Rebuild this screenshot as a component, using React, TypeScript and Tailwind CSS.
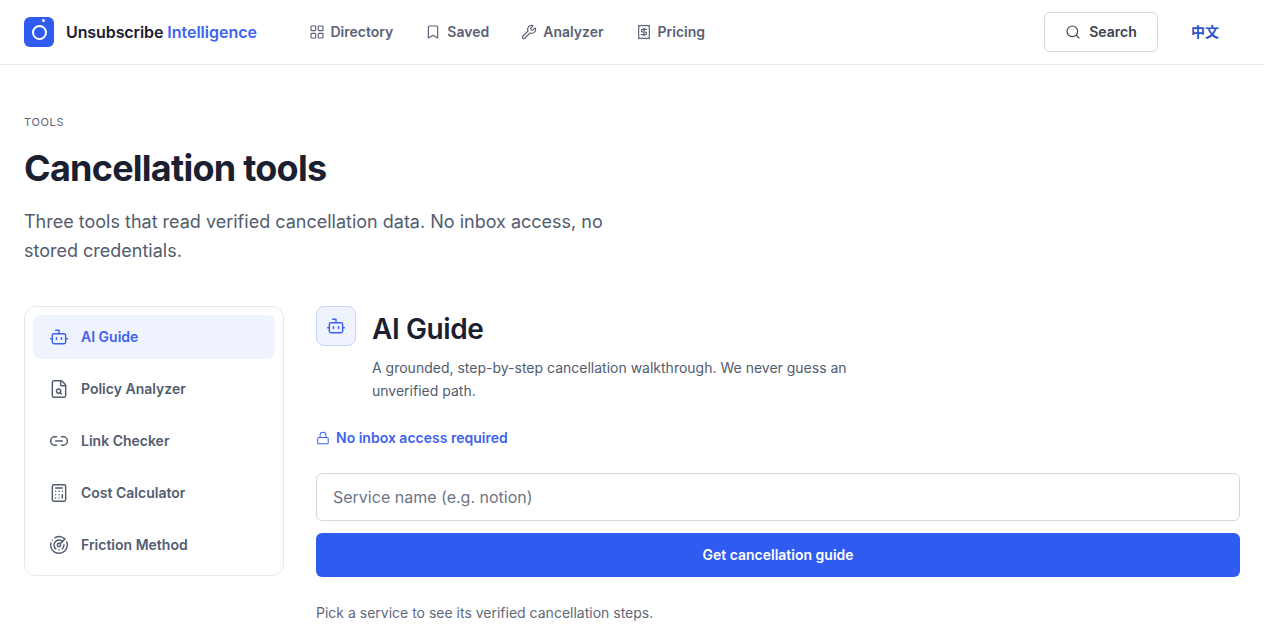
import React from "react";
import { LayoutGrid, Bookmark, Wrench, Receipt, Search, Bot, FileSearch, Link2, Calculator, Radar, Lock } from "lucide-react";

const nav = [
  { label: "Directory", Icon: LayoutGrid },
  { label: "Saved", Icon: Bookmark },
  { label: "Analyzer", Icon: Wrench },
  { label: "Pricing", Icon: Receipt },
];

const tools = [
  { label: "AI Guide", Icon: Bot, active: true },
  { label: "Policy Analyzer", Icon: FileSearch },
  { label: "Link Checker", Icon: Link2 },
  { label: "Cost Calculator", Icon: Calculator },
  { label: "Friction Method", Icon: Radar },
];

export default function App() {
  return (
    <div className="min-h-screen bg-white font-['Inter','Noto_Sans_CJK_SC',sans-serif] text-[#1a2030]">
      <header className="flex h-[65px] items-center border-b border-[#e8e9ee] px-6">
        <div className="flex items-center gap-3">
          <div className="relative flex h-[30px] w-[30px] items-center justify-center rounded-md bg-[#2f5bf0]">
            <span className="mt-[1px] h-[15px] w-[15px] rounded-full border-2 border-white" />
            <span className="absolute left-[18px] top-[2px] h-[3px] w-[3px] rounded-full bg-white" />
          </div>
          <span className="text-base font-semibold tracking-[-0.1px]">
            Unsubscribe <span className="tracking-normal text-[#3d63ee]">Intelligence</span>
          </span>
        </div>
        <nav className="ml-[51.5px] flex items-center gap-8">
          {nav.map(({ label, Icon }) => (
            <a key={label} className="flex items-center gap-[6px] text-sm font-semibold text-[#5a6274]">
              <Icon size={16} strokeWidth={1.75} />
              {label}
            </a>
          ))}
        </nav>
        <div className="ml-auto flex items-center">
          <button className="flex h-10 w-[114px] items-center justify-center gap-2 rounded-md border border-[#d5d8e2] text-sm font-semibold text-[#3c4250]">
            <Search size={16} strokeWidth={1.75} />
            Search
          </button>
          <button className="ml-[33px] mr-[21px] text-sm font-semibold text-[#2f52c8]">中文</button>
        </div>
      </header>

      <main className="px-6 pt-[50px]">
        <p className="text-[11px] leading-[14px] font-normal uppercase tracking-[0.66px] text-[#5a6274]">Tools</p>
        <h1 className="mt-[19px] text-[36px] leading-[40px] font-bold tracking-[-0.75px] text-[#1a2030]">Cancellation tools</h1>
        <p className="mt-[19px] w-[620px] text-lg leading-[29px] text-[#525c70]">
          Three tools that read verified cancellation data. No inbox access, no stored credentials.
        </p>

        <div className="mt-[41px] flex gap-8">
          <aside className="h-[270px] w-[260px] shrink-0 rounded-xl border border-[#e8e9ee] p-2">
            <ul className="flex flex-col gap-2">
              {tools.map(({ label, Icon, active }) => (
                <li
                  key={label}
                  className={`flex h-11 items-center gap-3 rounded-lg px-4 text-sm font-semibold ${active ? "bg-[#eff3fe] text-[#3d63ee]" : "text-[#525c70]"}`}
                >
                  <Icon size={20} strokeWidth={1.75} className="shrink-0" />
                  {label}
                </li>
              ))}
            </ul>
          </aside>

          <section className="min-w-0 flex-1">
            <div className="flex gap-4">
              <div className="flex h-10 w-10 shrink-0 items-center justify-center rounded-lg border border-[#c8d4fa] bg-[#eff3fe] text-[#3d63ee]">
                <Bot size={20} strokeWidth={1.75} />
              </div>
              <div>
                <h2 className="mt-[2px] text-[28px] leading-[42px] font-semibold tracking-[-0.4px] text-[#1a2030]">AI Guide</h2>
                <p className="mt-[6px] w-[500px] text-sm leading-[23px] text-[#525c70]">
                  A grounded, step-by-step cancellation walkthrough. We never guess an unverified path.
                </p>
              </div>
            </div>
            <div className="mt-[26px] flex items-center gap-[6px] text-sm leading-5 font-semibold text-[#3d63ee]">
              <Lock size={14} strokeWidth={1.75} />
              No inbox access required
            </div>
            <input
              placeholder="Service name (e.g. notion)"
              className="mt-[25px] block h-12 w-full rounded-md border border-[#d5d8e2] px-4 text-base text-[#1a2030] outline-none placeholder:text-[#6e7585]"
            />
            <button className="mt-3 block h-11 w-full rounded-md bg-[#2f5bf0] text-sm font-semibold text-white">
              Get cancellation guide
            </button>
            <p className="mt-[26px] text-sm leading-5 text-[#5f6878]">Pick a service to see its verified cancellation steps.</p>
          </section>
        </div>
      </main>
    </div>
  );
}
